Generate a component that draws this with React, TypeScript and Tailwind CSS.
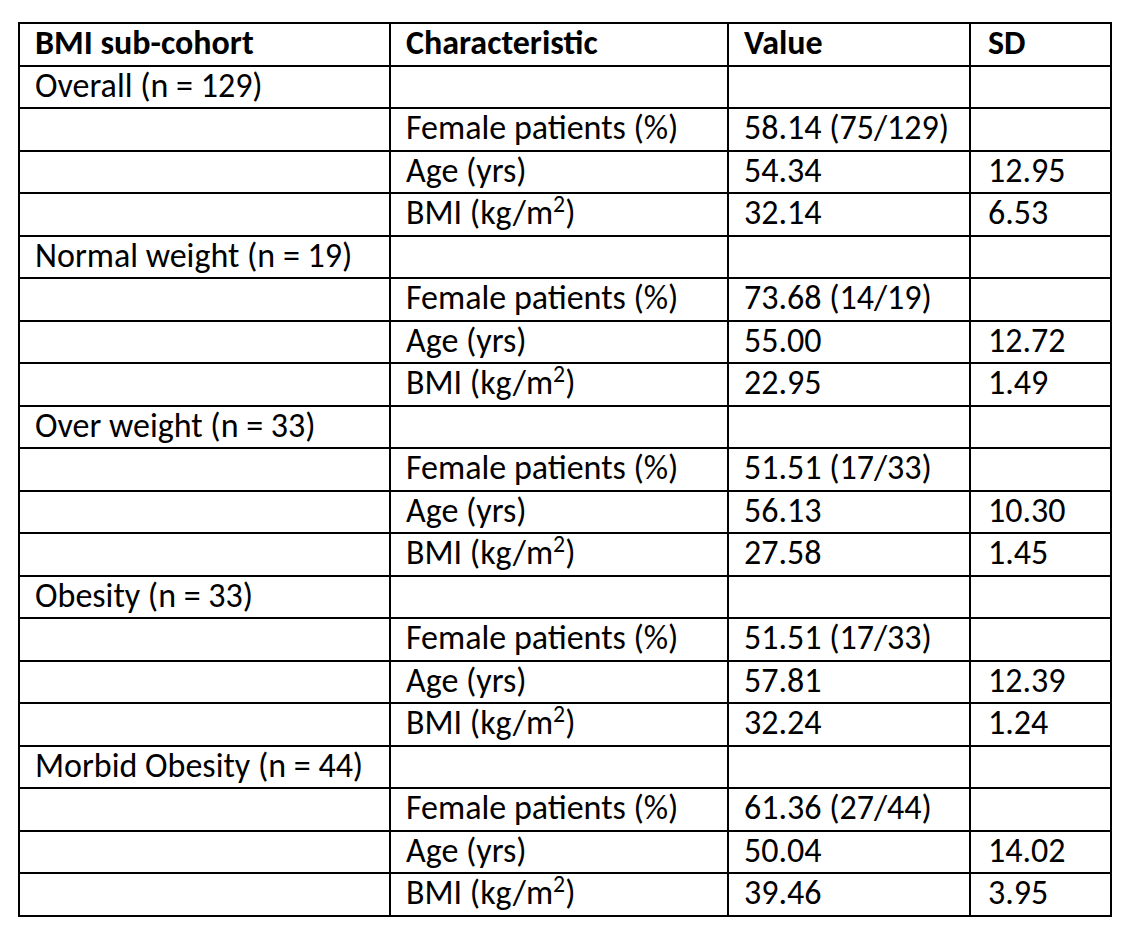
import React from 'react';

type Row = { cohort?: string; characteristic?: React.ReactNode; value?: string; sd?: string };

const bmi = (
  <>
    BMI (kg/m<sup className="text-[0.7em]">2</sup>)
  </>
);

const groups = [
  { name: 'Overall (n = 129)', female: '58.14 (75/129)', age: ['54.34', '12.95'], bmi: ['32.14', '6.53'] },
  { name: 'Normal weight (n = 19)', female: '73.68 (14/19)', age: ['55.00', '12.72'], bmi: ['22.95', '1.49'] },
  { name: 'Over weight (n = 33)', female: '51.51 (17/33)', age: ['56.13', '10.30'], bmi: ['27.58', '1.45'] },
  { name: 'Obesity (n = 33)', female: '51.51 (17/33)', age: ['57.81', '12.39'], bmi: ['32.24', '1.24'] },
  { name: 'Morbid Obesity (n = 44)', female: '61.36 (27/44)', age: ['50.04', '14.02'], bmi: ['39.46', '3.95'] },
];

const rows: Row[] = groups.flatMap((g) => [
  { cohort: g.name },
  { characteristic: 'Female patients (%)', value: g.female },
  { characteristic: 'Age (yrs)', value: g.age[0], sd: g.age[1] },
  { characteristic: bmi, value: g.bmi[0], sd: g.bmi[1] },
]);

const cell = 'border-2 border-black pl-[15px] pb-[2px] align-middle whitespace-nowrap';

export default function App() {
  return (
    <div
      className="min-h-screen bg-white text-black pt-[22px] pl-[18px]"
      style={{ fontFamily: 'Carlito, Calibri, "Liberation Sans", Arial, sans-serif' }}
    >
      <table className="border-collapse table-fixed text-[34px] leading-none">
        <colgroup>
          <col className="w-[371px]" />
          <col className="w-[338px]" />
          <col className="w-[242px]" />
          <col className="w-[141px]" />
        </colgroup>
        <thead>
          <tr className="h-[42.5px] font-bold">
            <th className={`${cell} text-left`}>BMI sub-cohort</th>
            <th className={`${cell} text-left`}>Characteristic</th>
            <th className={`${cell} text-left`}>Value</th>
            <th className={`${cell} text-left pl-[17px]`}>SD</th>
          </tr>
        </thead>
        <tbody>
          {rows.map((r, i) => (
            <tr key={i} className="h-[42.5px]">
              <td className={cell}>{r.cohort}</td>
              <td className={cell}>{r.characteristic}</td>
              <td className={cell}>{r.value}</td>
              <td className={`${cell} pl-[17px]`}>{r.sd}</td>
            </tr>
          ))}
        </tbody>
      </table>
    </div>
  );
}
